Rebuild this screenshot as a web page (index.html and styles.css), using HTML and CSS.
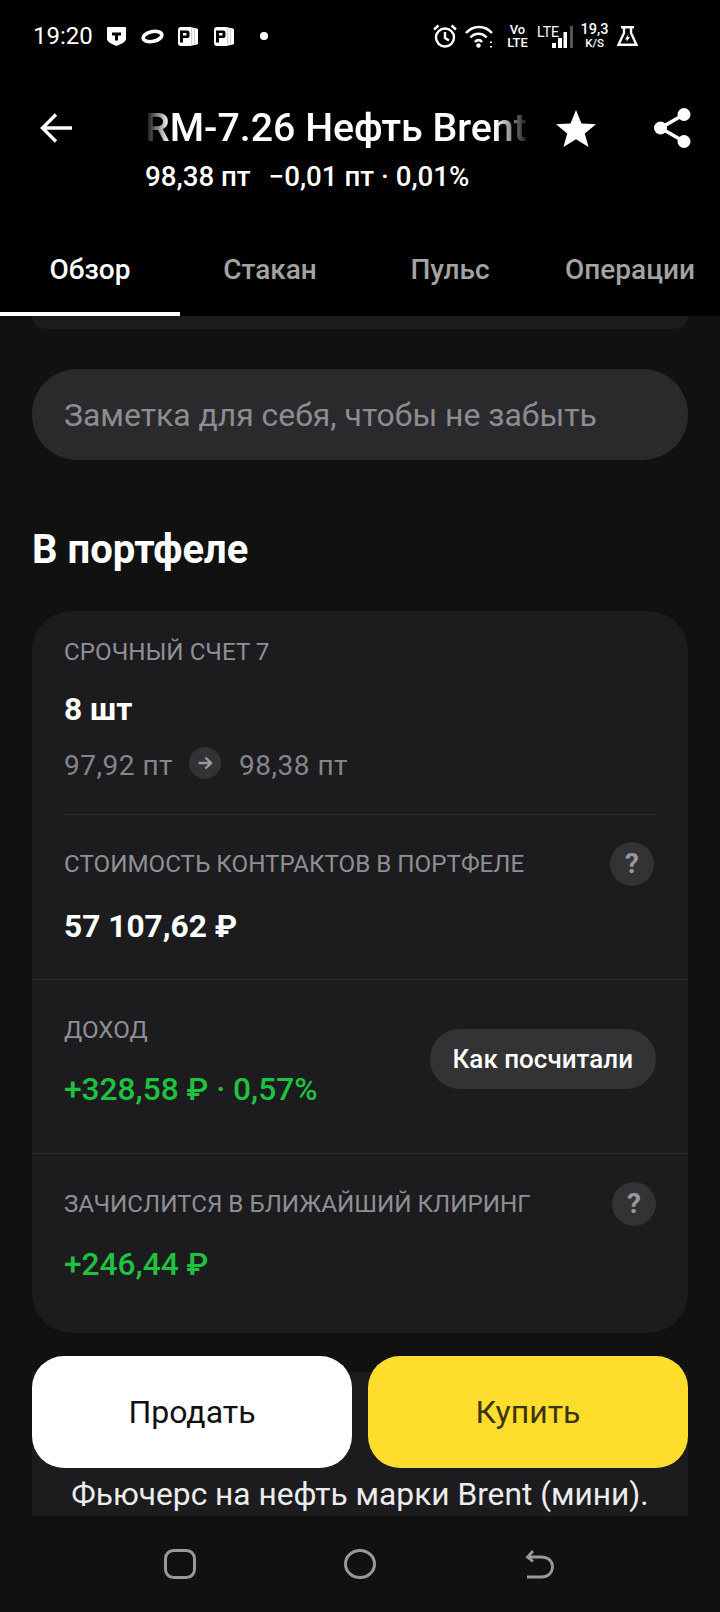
FILE: index.html
```html
<!DOCTYPE html>
<html lang="en">
<head>
    <meta charset="UTF-8">
    <meta name="viewport" content="width=device-width, initial-scale=1.0">
    <title>BRM-7.26</title>
    <link rel="stylesheet" href="styles.css">
</head>
<body>
    <div class="status-bar">
        <span class="status-time">19:20</span>
        <svg class="app-icon icon-shield" viewBox="0 0 19 19"><path fill="#fff" d="M1 0H18C18.600 0 19 .4 19 1V12C19 15 14 17 9.500 19C5 17 0 15 0 12V1C0 .4 .4 0 1 0Z"/><path fill="#000" d="M5 5.500H14V8.500H11V13.500H8V8.500H5Z"/></svg>
        <svg class="app-icon icon-ring" viewBox="0 0 23 15"><ellipse cx="11.500" cy="7.500" rx="9.500" ry="4.900" transform="rotate(-12 11.500 7.500)" fill="none" stroke="#fff" stroke-width="3.600"/></svg>
        <svg class="app-icon icon-page" viewBox="0 0 20 19"><path fill="#fff" d="M3 0H12L19 1.500C19.600 1.700 20 2 20 3V16C20 17 19.600 17.300 19 17.500L12 19H3C1 19 0 18 0 16V3C0 1 1 0 3 0Z"/><path fill="#000" d="M2 3.500H9C11 3.500 11.500 4.500 11.500 6V8.500C11.500 10.500 10.500 11 9 11H5V15.500H2ZM5 6V8.500H8.500V6Z"/><path fill="#999" d="M13.500 1.500H14H13.500ZM13.500 1.500H14.100V17.500H13.500ZM16.500 2H17V17H16.500Z"/></svg>
        <svg class="app-icon icon-page" viewBox="0 0 20 19"><path fill="#fff" d="M3 0H12L19 1.500C19.600 1.700 20 2 20 3V16C20 17 19.600 17.300 19 17.500L12 19H3C1 19 0 18 0 16V3C0 1 1 0 3 0Z"/><path fill="#000" d="M2 3.500H9C11 3.500 11.500 4.500 11.500 6V8.500C11.500 10.500 10.500 11 9 11H5V15.500H2ZM5 6V8.500H8.500V6Z"/><path fill="#999" d="M13.500 1.500H14.100V17.500H13.500ZM16.500 2H17V17H16.500Z"/></svg>
        <span class="status-dot"></span>

        <div class="status-right">
            <svg class="sys-alarm" viewBox="0 0 24 24" fill="none" stroke="#fff" stroke-width="2.400"><circle cx="12" cy="13.500" r="9"/><path d="M12 8V14L16 16.500M1 5.500L5.500 1.500M23 5.500L18.500 1.500"/></svg>
            <svg class="sys-wifi" viewBox="0 0 29 23" fill="none" stroke="#fff" stroke-width="2.600"><path d="M1 8C8 0 20 0 27 8M5.500 12.500C10 7.500 17 7.500 21.500 12.500M10 17C12 14.500 15 14.500 17 17"/><circle cx="13.500" cy="20.500" r="2.200" fill="#fff" stroke="none"/><path d="M26 16.500V18M26 21V22.500" stroke-width="2"/></svg>
            <div class="sys-volte"><span>Vo</span><span>LTE</span></div>
            <div class="sys-signal">
                <span class="signal-lte">LTE</span>
                <svg viewBox="0 0 36 23"><path fill="#fff" d="M15 18H19V23H15ZM21 13H25V23H21ZM26.500 7H30V23H26.500Z"/><path fill="#555" d="M33 1H36V23H33Z"/></svg>
            </div>
            <div class="sys-speed"><span>19,3</span><span class="speed-unit">K/S</span></div>
            <svg class="sys-flask" viewBox="0 0 21 20" fill="none" stroke="#fff" stroke-width="2.400"><path d="M4 1.200H17M7 1.200V7L1.500 18.800H19.500L14 7V1.200"/><path fill="#fff" stroke="none" d="M11.500 8L8 13.500H10L9.500 16L13 11H11Z"/></svg>
        </div>
    </div>

    <div class="top-bar">
        <svg class="back-icon" viewBox="0 0 32 30" fill="none" stroke="#fff" stroke-width="3.400" stroke-linejoin="miter"><path d="M32 15H3M16 1.500L2.500 15L16 28.500"/></svg>
        <div class="title-block">
            <div class="title-text">RM-7.26 Нефть Brent</div>
            <div class="price-line"><span class="price-now">98,38 пт</span><span>−0,01 пт · 0,01%</span></div>
        </div>
        <svg class="star-icon" viewBox="0 0 40 37"><path fill="#fff" d="M20 0L25.500 13.500L40 14.300L28.800 23.500L32.500 37L20 29.300L7.500 37L11.200 23.500L0 14.300L14.500 13.500Z"/></svg>
        <svg class="share-icon" viewBox="0 0 37 40" fill="#fff"><circle cx="30" cy="6.500" r="6.500"/><circle cx="30" cy="33.500" r="6.500"/><circle cx="6.500" cy="20" r="6.500"/><path d="M30 6.500L6.500 20L30 33.500" fill="none" stroke="#fff" stroke-width="3.600"/></svg>
    </div>

    <div class="tabs">
        <div class="tab tab-active">Обзор</div>
        <div class="tab">Стакан</div>
        <div class="tab">Пульс</div>
        <div class="tab">Операции</div>
    </div>

    <div class="content">
        <div class="prev-card"></div>
        <div class="note-field">Заметка для себя, чтобы не забыть</div>
        <h2 class="section-title">В портфеле</h2>

        <div class="portfolio-card">
            <div class="row row-account">
                <div class="row-label">СРОЧНЫЙ СЧЕТ 7</div>
                <div class="row-value qty">8 шт</div>
                <div class="price-change">
                    <span class="price-point">97,92 пт</span>
                    <span class="arrow-badge">
                        <svg viewBox="0 0 16 16" fill="none" stroke="#9a9a9f" stroke-width="2.400"><path d="M1.500 8H13.500M8.500 2.500L14 8L8.500 13.500"/></svg>
                    </span>
                    <span class="price-point">98,38 пт</span>
                </div>
            </div>
            <div class="row row-cost">
                <div class="row-head">
                    <div class="row-label">СТОИМОСТЬ КОНТРАКТОВ В ПОРТФЕЛЕ</div>
                    <div class="help-badge help-first">?</div>
                </div>
                <div class="row-value cost-value">57 107,62 ₽</div>
            </div>
            <div class="row row-income">
                <div>
                    <div class="row-label">ДОХОД</div>
                    <div class="row-value income-value">+328,58 ₽ · 0,57%</div>
                </div>
                <div class="how-button">Как посчитали</div>
            </div>
            <div class="row row-clearing">
                <div class="row-head">
                    <div class="row-label">ЗАЧИСЛИТСЯ В БЛИЖАЙШИЙ КЛИРИНГ</div>
                    <div class="help-badge">?</div>
                </div>
                <div class="row-value clearing-value">+246,44 ₽</div>
            </div>
        </div>

        <div class="about-card">Фьючерс на нефть марки Brent (мини).</div>

        <div class="trade-buttons">
            <div class="trade-button sell">Продать</div>
            <div class="trade-button buy">Купить</div>
        </div>
    </div>

    <div class="nav-bar">
        <svg viewBox="0 0 32 30" fill="none" stroke="#999" stroke-width="3"><rect x="1.500" y="1.500" width="29" height="27" rx="8"/></svg>
        <svg viewBox="0 0 32 30" fill="none" stroke="#999" stroke-width="3"><ellipse cx="16" cy="15" rx="14.500" ry="13.500"/></svg>
        <svg viewBox="0 0 32 30" fill="none" stroke="#999" stroke-width="2.800"><path d="M3 28H17C24 28 28.500 24 28.500 17.500C28.500 12 24 8 17 8H3.500M9 2L3.500 8L9 12.500"/></svg>
    </div>
</body>
</html>
```

FILE: styles.css
```css
body {
    margin: 0;
    height: 1612px;
    width: 720px;
    display: flex;
    flex-direction: column;
    background-color: #111112;
    color: white;
    font-family: Roboto, Arial, sans-serif;
    overflow: hidden;
}

/* status bar */
.status-bar {
    height: 72px;
    flex-shrink: 0;
    background-color: black;
    display: flex;
    align-items: center;
    padding-left: 33px;
    box-sizing: border-box;
}

.status-time {
    font-size: 24px;
    width: 74px;
}

.app-icon {
    display: block;
    height: 19px;
    width: 19px;
}

.icon-shield {
    margin-right: 15px;
}

.icon-ring {
    width: 23px;
    height: 15px;
    margin-right: 14px;
}

.icon-page {
    width: 20px;
    margin-right: 16px;
}

.status-dot {
    width: 8px;
    height: 8px;
    border-radius: 50%;
    background-color: white;
    margin-left: 10px;
}

.status-right {
    margin-left: auto;
    display: flex;
    align-items: center;
    padding-right: 82px;
}

.sys-alarm {
    width: 24px;
    height: 24px;
    margin-right: 8px;
}

.sys-wifi {
    width: 29px;
    height: 23px;
    margin-right: 13px;
}

.sys-volte {
    display: flex;
    flex-direction: column;
    align-items: center;
    width: 21px;
    font-size: 13px;
    line-height: 13px;
    margin-right: 9px;
    font-weight: 500;
}

.sys-signal {
    width: 36px;
    height: 23px;
    position: relative;
    margin-right: 8px;
}

.sys-signal svg {
    display: block;
    width: 36px;
    height: 23px;
}

.signal-lte {
    position: absolute;
    left: 0;
    top: 0;
    font-size: 14px;
    line-height: 14px;
}

.sys-speed {
    display: flex;
    flex-direction: column;
    align-items: center;
    width: 27px;
    font-size: 14.500px;
    line-height: 14px;
    margin-right: 9px;
    font-weight: 500;
}

.speed-unit {
    font-size: 11.500px;
    line-height: 12px;
}

.sys-flask {
    width: 21px;
    height: 20px;
}

/* header */
.top-bar {
    height: 144px;
    flex-shrink: 0;
    background-color: black;
    display: flex;
    align-items: flex-start;
    position: relative;
    box-sizing: border-box;
    padding-top: 36px;
}

.back-icon {
    width: 32px;
    height: 30px;
    margin: 5px 0 0 40px;
    flex-shrink: 0;
}

.title-block {
    width: 385px;
    margin-left: 73px;
}

.title-text {
    font-size: 39.300px;
    font-weight: 500;
    line-height: 40px;
    white-space: nowrap;
    -webkit-mask-image: linear-gradient(to right, transparent 0, black 24px, black 350px, rgba(0, 0, 0, 0.1) 382px);
    mask-image: linear-gradient(to right, transparent 0, black 24px, black 350px, rgba(0, 0, 0, 0.1) 382px);
}

.price-line {
    font-size: 27.700px;
    font-weight: 500;
    line-height: 32px;
    margin-top: 13px;
    white-space: nowrap;
}

.price-now {
    margin-right: 18px;
}

.star-icon {
    width: 40px;
    height: 37px;
    margin: 2px 0 0 26px;
    flex-shrink: 0;
}

.share-icon {
    width: 37px;
    height: 40px;
    margin-left: 58px;
    flex-shrink: 0;
}

.tabs {
    height: 100px;
    flex-shrink: 0;
    display: flex;
    background-color: black;
}

.tab {
    width: 180px;
    box-sizing: border-box;
    text-align: center;
    font-size: 28px;
    font-weight: 500;
    line-height: 36px;
    padding-top: 36px;
    color: #a3a3a3;
}

.tab-active {
    color: white;
    border-bottom: 4px solid white;
}

/* scrolling content */
.content {
    flex: 1;
    position: relative;
    overflow: hidden;
    padding: 0 32px;
}

.prev-card {
    height: 13px;
    background-color: #1c1c1e;
    border-radius: 0 0 40px 40px;
}

.note-field {
    margin-top: 40px;
    height: 91px;
    line-height: 93px;
    padding-left: 32px;
    background-color: #2a2a2c;
    border-radius: 45px;
    font-size: 31.900px;
    color: #8c8c91;
}

.section-title {
    margin: 68px 0 39px;
    font-size: 40px;
    line-height: 44px;
    font-weight: 700;
}

.portfolio-card {
    background-color: #1c1c1e;
    border-radius: 40px;
}

.row {
    border-bottom: 1px solid #2e2e30;
    padding-left: 32px;
    padding-right: 32px;
}

.row:last-child {
    border-bottom: none;
}

.row-label {
    font-size: 24.200px;
    line-height: 30px;
    color: #8f8f96;
}

.row-value {
    font-size: 31.700px;
    line-height: 36px;
    font-weight: 700;
}

.row-account {
    margin: 0 32px;
    padding: 26px 0 32px;
}

.qty {
    margin-top: 25px;
}

.price-change {
    display: flex;
    align-items: flex-start;
    margin-top: 19px;
    font-size: 28px;
    line-height: 32px;
    letter-spacing: 0.5px;
    color: #85858a;
}

.price-point {
    padding-top: 3px;
}

.arrow-badge {
    display: flex;
    align-items: center;
    justify-content: center;
    width: 32px;
    height: 32px;
    border-radius: 50%;
    background-color: #333335;
    margin: 0 18px 0 16px;
}

.arrow-badge svg {
    width: 16px;
    height: 16px;
}

.row-head {
    display: flex;
    align-items: center;
    justify-content: space-between;
}

.help-badge {
    width: 44px;
    height: 44px;
    border-radius: 50%;
    background-color: #333335;
    color: #97979c;
    font-size: 28px;
    font-weight: 700;
    line-height: 44px;
    text-align: center;
}

.help-first {
    margin-right: 2px;
}

.row-cost {
    padding-top: 27px;
    padding-bottom: 34px;
}

.cost-value {
    margin-top: 23px;
}

.row-income {
    display: flex;
    justify-content: space-between;
    align-items: flex-start;
    padding-top: 35px;
    padding-bottom: 45px;
}

.income-value {
    margin-top: 27px;
    color: #1fc140;
    font-weight: 500;
}

.how-button {
    margin-top: 14px;
    height: 60px;
    line-height: 60px;
    padding: 0 23px;
    border-radius: 30px;
    background-color: #333335;
    font-size: 26px;
    font-weight: 500;
}

.row-clearing {
    padding-top: 28px;
    padding-bottom: 50px;
}

.clearing-value {
    margin-top: 21px;
    color: #1fc140;
    font-weight: 500;
}

.about-card {
    margin-top: 39px;
    height: 144px;
    box-sizing: border-box;
    padding-top: 103px;
    background-color: #1c1c1e;
    font-size: 31.700px;
    line-height: 40px;
    text-align: center;
    white-space: nowrap;
    color: #ececec;
}

/* these sit on top of the scrolled content */
.trade-buttons {
    position: absolute;
    left: 32px;
    right: 32px;
    bottom: 48px;
    display: flex;
    gap: 16px;
}

.trade-button {
    flex: 1;
    height: 112px;
    line-height: 112px;
    border-radius: 32px;
    text-align: center;
    font-size: 32px;
}

.sell {
    background-color: white;
    color: #111;
}

.buy {
    background-color: #ffdd2d;
    color: #3a3510;
}

.nav-bar {
    height: 96px;
    flex-shrink: 0;
    display: flex;
    justify-content: center;
    gap: 148px;
    padding-top: 33px;
    box-sizing: border-box;
}

.nav-bar svg {
    width: 32px;
    height: 30px;
}
```
